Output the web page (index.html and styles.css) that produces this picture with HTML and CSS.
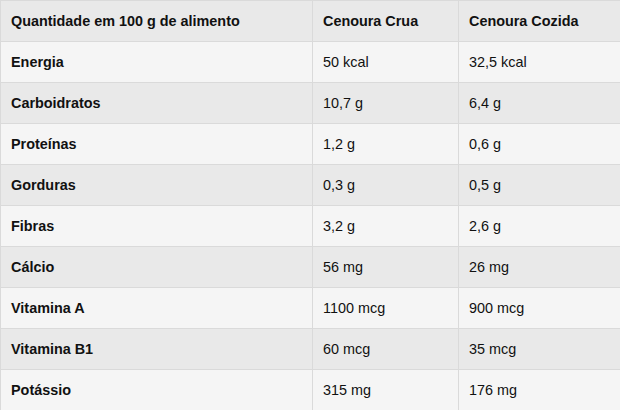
FILE: index.html
```html
<!DOCTYPE html>
<html lang="pt">
<head>
<meta charset="utf-8">
<link rel="stylesheet" href="styles.css">
</head>
<body>
<table class="nutri">
  <thead>
    <tr><th class="c1">Quantidade em 100 g de alimento</th><th class="c2">Cenoura Crua</th><th class="c3">Cenoura Cozida</th></tr>
  </thead>
  <tbody>
    <tr><th>Energia</th><td>50 kcal</td><td>32,5 kcal</td></tr>
    <tr><th>Carboidratos</th><td>10,7 g</td><td>6,4 g</td></tr>
    <tr><th>Proteínas</th><td>1,2 g</td><td>0,6 g</td></tr>
    <tr><th>Gorduras</th><td>0,3 g</td><td>0,5 g</td></tr>
    <tr><th>Fibras</th><td>3,2 g</td><td>2,6 g</td></tr>
    <tr><th>Cálcio</th><td>56 mg</td><td>26 mg</td></tr>
    <tr><th>Vitamina A</th><td>1100 mcg</td><td>900 mcg</td></tr>
    <tr><th>Vitamina B1</th><td>60 mcg</td><td>35 mcg</td></tr>
    <tr><th>Potássio</th><td>315 mg</td><td>176 mg</td></tr>
  </tbody>
</table>
</body>
</html>
```
FILE: styles.css
```css
html, body {
  margin: 0;
  padding: 0;
  background: #f5f5f5;
  overflow: hidden;
}
.nutri {
  border-collapse: collapse;
  width: 622px;
  table-layout: fixed;
  font-family: "Liberation Sans", Arial, sans-serif;
  font-size: 14.4px;
  color: #111;
}
.nutri th, .nutri td {
  border: 1px solid #dadada;
  height: 41px;
  padding: 0 10px;
  text-align: left;
  vertical-align: middle;
  box-sizing: border-box;
  line-height: 16px;
}
.nutri th { font-weight: bold; }
.nutri td { font-weight: normal; }
.nutri .c1 { width: 312px; }
.nutri .c2 { width: 146px; }
.nutri thead tr { background: #e9e9e9; }
.nutri tbody tr { background: #f5f5f5; }
.nutri tbody tr:nth-child(even) { background: #e9e9e9; }
```
